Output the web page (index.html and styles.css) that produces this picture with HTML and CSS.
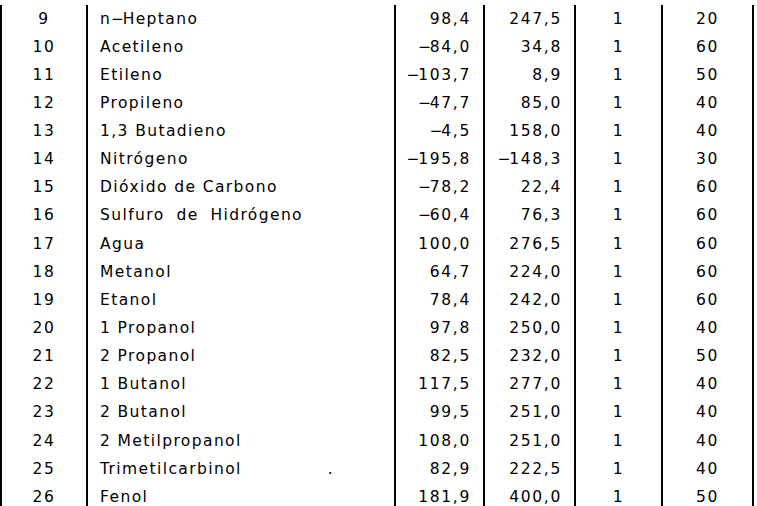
FILE: index.html
```html
<!DOCTYPE html>
<html lang="es">
<head>
<meta charset="utf-8">
<title>Tabla de compuestos</title>
<link rel="stylesheet" href="styles.css">
</head>
<body>
<table class="data">
  <colgroup>
    <col class="c-num"><col class="c-name"><col class="c-a"><col class="c-b"><col class="c-c"><col class="c-d">
  </colgroup>
  <tbody>
    <tr><td class="num">9</td><td class="name">n<span class="m">−</span>Heptano</td><td class="val">98,4</td><td class="val">247,5</td><td class="mid">1</td><td class="mid">20</td></tr>
    <tr><td class="num">10</td><td class="name">Acetileno</td><td class="val"><span class="m">−</span>84,0</td><td class="val">34,8</td><td class="mid">1</td><td class="mid">60</td></tr>
    <tr><td class="num">11</td><td class="name">Etileno</td><td class="val"><span class="m">−</span>103,7</td><td class="val">8,9</td><td class="mid">1</td><td class="mid">50</td></tr>
    <tr><td class="num">12</td><td class="name">Propileno</td><td class="val"><span class="m">−</span>47,7</td><td class="val">85,0</td><td class="mid">1</td><td class="mid">40</td></tr>
    <tr><td class="num">13</td><td class="name">1,3 Butadieno</td><td class="val"><span class="m">−</span>4,5</td><td class="val">158,0</td><td class="mid">1</td><td class="mid">40</td></tr>
    <tr><td class="num">14</td><td class="name">Nitrógeno</td><td class="val"><span class="m">−</span>195,8</td><td class="val"><span class="m">−</span>148,3</td><td class="mid">1</td><td class="mid">30</td></tr>
    <tr><td class="num">15</td><td class="name">Dióxido de Carbono</td><td class="val"><span class="m">−</span>78,2</td><td class="val">22,4</td><td class="mid">1</td><td class="mid">60</td></tr>
    <tr><td class="num">16</td><td class="name wide">Sulfuro de Hidrógeno</td><td class="val"><span class="m">−</span>60,4</td><td class="val">76,3</td><td class="mid">1</td><td class="mid">60</td></tr>
    <tr><td class="num">17</td><td class="name">Agua</td><td class="val">100,0</td><td class="val">276,5</td><td class="mid">1</td><td class="mid">60</td></tr>
    <tr><td class="num">18</td><td class="name">Metanol</td><td class="val">64,7</td><td class="val">224,0</td><td class="mid">1</td><td class="mid">60</td></tr>
    <tr><td class="num">19</td><td class="name">Etanol</td><td class="val">78,4</td><td class="val">242,0</td><td class="mid">1</td><td class="mid">60</td></tr>
    <tr><td class="num">20</td><td class="name">1 Propanol</td><td class="val">97,8</td><td class="val">250,0</td><td class="mid">1</td><td class="mid">40</td></tr>
    <tr><td class="num">21</td><td class="name">2 Propanol</td><td class="val">82,5</td><td class="val">232,0</td><td class="mid">1</td><td class="mid">50</td></tr>
    <tr><td class="num">22</td><td class="name">1 Butanol</td><td class="val">117,5</td><td class="val">277,0</td><td class="mid">1</td><td class="mid">40</td></tr>
    <tr><td class="num">23</td><td class="name">2 Butanol</td><td class="val">99,5</td><td class="val">251,0</td><td class="mid">1</td><td class="mid">40</td></tr>
    <tr><td class="num">24</td><td class="name">2 Metilpropanol</td><td class="val">108,0</td><td class="val">251,0</td><td class="mid">1</td><td class="mid">40</td></tr>
    <tr><td class="num">25</td><td class="name">Trimetilcarbinol<span class="dot">.</span></td><td class="val">82,9</td><td class="val">222,5</td><td class="mid">1</td><td class="mid">40</td></tr>
    <tr><td class="num">26</td><td class="name">Fenol</td><td class="val">181,9</td><td class="val">400,0</td><td class="mid">1</td><td class="mid">50</td></tr>
  </tbody>
</table>
</body>
</html>
```

FILE: styles.css
```css
html, body {
  margin: 0;
  padding: 0;
  background: #fff;
}
body {
  padding-top: 4.5px;
  overflow: hidden;
  font-family: "DejaVu Sans", Verdana, sans-serif;
  font-size: 15.5px;
  letter-spacing: 1.7px;
  color: #000;
}
.data {
  border-collapse: separate;
  border-spacing: 0;
  table-layout: fixed;
  width: 754px;
}
.c-num { width: 88px; }
.c-name { width: 308px; }
.c-a { width: 89px; }
.c-b { width: 91px; }
.c-c { width: 87px; }
.c-d { width: 91px; }
.data td {
  height: 28.14px;
  line-height: 28.14px;
  padding: 0;
  border-right: 2px solid #000;
  white-space: nowrap;
  box-sizing: border-box;
}
.data td.num {
  border-left: 2px solid #000;
  text-align: center;
}
.data td.name {
  text-align: left;
  padding-left: 12px;
  letter-spacing: 1.4px;
}
.data td.wide {
  word-spacing: 5.5px;
}
.data td.val {
  text-align: right;
  padding-right: 12px;
}
.data td.mid {
  text-align: center;
}
.m {
  letter-spacing: -1.6px;
}
.dot {
  margin-left: 86px;
}
```
